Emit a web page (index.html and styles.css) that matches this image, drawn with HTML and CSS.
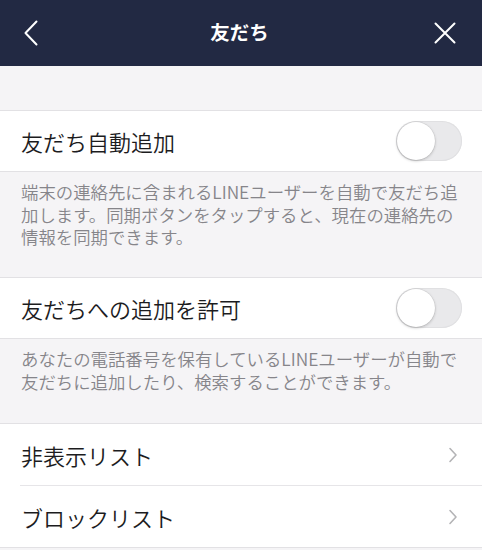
FILE: index.html
```html
<!DOCTYPE html>
<html lang="ja">
<head>
<meta charset="utf-8">
<link rel="stylesheet" href="styles.css">
</head>
<body>
<div class="screen">
  <header class="nav">
    <svg class="nav-back" width="16" height="26" viewBox="0 0 16 26"><path d="M13.5 1.5 L2.5 13 L13.5 24.5" fill="none" stroke="#fff" stroke-width="2" stroke-linecap="round" stroke-linejoin="round"/></svg>
    <h1 class="nav-title">友だち</h1>
    <svg class="nav-close" width="22" height="22" viewBox="0 0 22 22"><path d="M1.5 1.5 L20.5 20.5 M20.5 1.5 L1.5 20.5" fill="none" stroke="#fff" stroke-width="2" stroke-linecap="round"/></svg>
  </header>
  <div class="spacer"></div>
  <div class="row row-top">
    <span class="row-label">友だち自動追加</span>
    <span class="toggle"><span class="knob"></span></span>
  </div>
  <p class="desc desc-1">端末の連絡先に含まれるLINEユーザーを自動で友だち追加します。同期ボタンをタップすると、現在の連絡先の情報を同期できます。</p>
  <div class="row row-top">
    <span class="row-label">友だちへの追加を許可</span>
    <span class="toggle"><span class="knob"></span></span>
  </div>
  <p class="desc desc-2">あなたの電話番号を保有しているLINEユーザーが自動で友だちに追加したり、検索することができます。</p>
  <div class="list">
    <div class="row link">
      <span class="row-label">非表示リスト</span>
      <svg class="chev" width="10" height="16" viewBox="0 0 10 16"><path d="M2 1.5 L8 8 L2 14.5" fill="none" stroke="#b4b4b6" stroke-width="1.6" stroke-linecap="round" stroke-linejoin="round"/></svg>
    </div>
    <div class="row link">
      <span class="row-label">ブロックリスト</span>
      <svg class="chev" width="10" height="16" viewBox="0 0 10 16"><path d="M2 1.5 L8 8 L2 14.5" fill="none" stroke="#b4b4b6" stroke-width="1.6" stroke-linecap="round" stroke-linejoin="round"/></svg>
    </div>
  </div>
</div>
</body>
</html>
```
FILE: styles.css
```css
html, body {
  margin: 0;
  padding: 0;
  background: #f5f4f6;
}
body {
  font-family: "Noto Sans CJK JP", "Noto Sans", sans-serif;
  width: 482px;
  height: 550px;
  overflow: hidden;
}
.screen {
  display: flex;
  flex-direction: column;
}
.nav {
  height: 66px;
  background: #222943;
  display: flex;
  align-items: center;
  justify-content: space-between;
  padding: 0 26px 0 23px;
  box-sizing: border-box;
}
.nav-back {
  display: block;
}
.nav-title {
  margin: 0 0 3px 6px;
  color: #fff;
  font-size: 19.5px;
  font-weight: 700;
  line-height: 1;
}
.nav-close {
  display: block;
}
.spacer {
  height: 45px;
  border-bottom: 1px solid #e2e1e4;
  box-sizing: border-box;
}
.row {
  background: #fff;
  display: flex;
  align-items: center;
  justify-content: space-between;
  height: 61px;
  padding: 0 20px 0 21px;
  box-sizing: border-box;
  border-bottom: 1px solid #e2e1e4;
}
.row-label {
  font-size: 22px;
  font-weight: 350;
  color: #1c1c1e;
  line-height: 1;
}
.toggle {
  width: 66px;
  height: 40px;
  border-radius: 20px;
  background: #e9e9eb;
  box-shadow: inset 0 0 0 1px #e0e0e2;
  position: relative;
  flex: none;
}
.knob {
  position: absolute;
  left: 1px;
  top: 1px;
  width: 38px;
  height: 38px;
  border-radius: 50%;
  background: #fff;
  box-shadow: 0 1px 3px rgba(0,0,0,0.22), 0 0 0 0.5px rgba(0,0,0,0.08);
}
.desc {
  margin: 0;
  padding: 9px 20px 0 21px;
  font-size: 17.4px;
  font-weight: 350;
  line-height: 22.5px;
  color: #86858a;
  box-sizing: border-box;
  border-bottom: 1px solid #e2e1e4;
}
.desc-1 {
  height: 106px;
}
.desc-2 {
  height: 85px;
}
.list {
  background: #fff;
  border-bottom: 1px solid #e2e1e4;
}
.list .row {
  border-bottom: none;
}
.list .row + .row {
  border-top: 1px solid #e6e5e8;
  margin-left: 20px;
  padding-left: 1px;
  height: 62px;
}
.chev {
  display: block;
  margin-right: 4px;
}
```
